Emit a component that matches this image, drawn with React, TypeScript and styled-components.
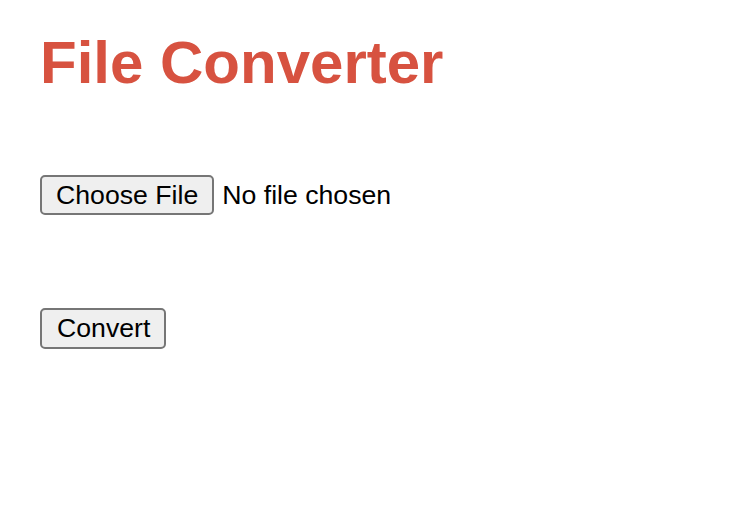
import React from "react";
import styled, { createGlobalStyle } from "styled-components";

const GlobalStyle = createGlobalStyle`
  html, body { margin: 0; padding: 0; background: #ffffff; }
  body { font-family: "Liberation Sans", Arial, sans-serif; color: #000; }
`;

const Page = styled.main`
  display: flex;
  flex-direction: column;
  align-items: flex-start;
  padding: 28px 40px;
`;

const Title = styled.h1`
  margin: 0;
  font-family: "Liberation Sans", Arial, sans-serif;
  font-size: 60px;
  line-height: 69px;
  font-weight: 700;
  color: #d75240;
`;

const FileRow = styled.div`
  display: flex;
  align-items: center;
  margin-top: 78px;
  gap: 8px;
`;

const Button = styled.button`
  box-sizing: border-box;
  height: 40px;
  padding: 0 14px;
  font-family: "Liberation Sans", Arial, sans-serif;
  font-size: 26.67px;
  line-height: 31px;
  color: #000;
  background: #efefef;
  border: 2px solid #767676;
  border-radius: 5px;
  cursor: pointer;
`;

const FileStatus = styled.span`
  font-size: 26.67px;
  line-height: 31px;
  color: #000;
`;

const HiddenInput = styled.input`
  display: none;
`;

const ConvertButton = styled(Button)`
  margin-top: 93px;
  height: 41px;
  padding: 0 14px 0 15px;
`;

export default function App() {
  const ref = React.useRef<HTMLInputElement>(null);
  const [name, setName] = React.useState<string>("No file chosen");
  return (
    <>
      <GlobalStyle />
      <Page>
        <Title>File Converter</Title>
        <FileRow>
          <HiddenInput
            ref={ref}
            type="file"
            onChange={(e) => setName(e.target.files?.[0]?.name ?? "No file chosen")}
          />
          <Button type="button" onClick={() => ref.current?.click()}>
            Choose File
          </Button>
          <FileStatus>{name}</FileStatus>
        </FileRow>
        <ConvertButton type="button">Convert</ConvertButton>
      </Page>
    </>
  );
}
